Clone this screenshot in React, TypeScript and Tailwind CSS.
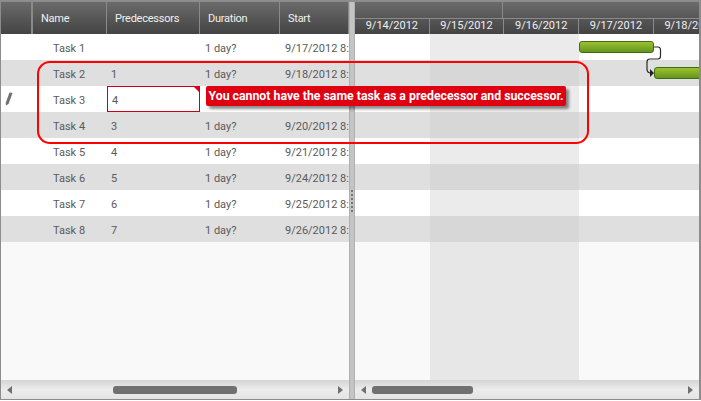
const tasks = [
  { name: "Task 1", pred: "", start: "9/17/2012 8:00 AM" },
  { name: "Task 2", pred: "1", start: "9/18/2012 8:00 AM" },
  { name: "Task 3", pred: "4", start: "9/19/2012 8:00 AM" },
  { name: "Task 4", pred: "3", start: "9/20/2012 8:00 AM" },
  { name: "Task 5", pred: "4", start: "9/21/2012 8:00 AM" },
  { name: "Task 6", pred: "5", start: "9/24/2012 8:00 AM" },
  { name: "Task 7", pred: "6", start: "9/25/2012 8:00 AM" },
  { name: "Task 8", pred: "7", start: "9/26/2012 8:00 AM" },
];

const days = ["9/14/2012", "9/15/2012", "9/16/2012", "9/17/2012", "9/18/2012"];

const HeaderCell = ({ label, width }: { label: string; width: string }) => (
  <div className={`${width} flex shrink-0 items-center border-r border-[#8a8a8a] pt-[3px] pl-2 text-[11px] tracking-[-0.25px] text-[#f0f0f0]`}>{label}</div>
);

const ScrollBar = ({ left, width }: { left: string; width: string }) => (
  <div className="flex h-[19px] items-center bg-gradient-to-b from-[#d4d4d4] via-[#ececec] to-[#e4e4e4] px-[6px]">
    <div className="h-0 w-0 border-y-[4px] border-r-[5px] border-y-transparent border-r-[#707070]" />
    <div className="flex-1">
      <div className={`${left} ${width} h-[8px] rounded-[3px] bg-[#707070]`} />
    </div>
    <div className="h-0 w-0 border-y-[4px] border-l-[5px] border-y-transparent border-l-[#707070]" />
  </div>
);

export default function App() {
  return (
    <div className="relative h-[401px] w-[701px] overflow-hidden bg-white font-['Roboto','Liberation_Sans',sans-serif]">
      <div className="flex h-[400px] w-[701px] border-2 border-b-1 border-l-1 border-[#8c8c8c]">
        {/* grid side */}
        <div className="flex w-[348px] shrink-0 flex-col bg-[#f9f9f9]">
          <div className="flex h-[32px] shrink-0 overflow-hidden bg-gradient-to-b from-[#6b6b6b] to-[#444444]">
            <div className="w-[32px] shrink-0 border-r-2 border-[#8a8a8a]" />
            <HeaderCell label="Name" width="w-[74px]" />
            <HeaderCell label="Predecessors" width="w-[93px]" />
            <HeaderCell label="Duration" width="w-[80px]" />
            <HeaderCell label="Start" width="w-[69px]" />
          </div>
          <div className="flex-1 overflow-hidden">
            {tasks.map((t, i) => (
              <div
                key={t.name}
                className={`flex h-[26px] items-start overflow-hidden text-[11px] leading-[29px] whitespace-nowrap text-[#5a5a5a] ${i % 2 ? "bg-[#dfdfdf]" : "bg-white"}`}
              >
                <div className="flex w-[32px] shrink-0 justify-start pl-[4px]">
                  {i === 2 && (
                    <svg width="8" height="14" viewBox="0 0 8 14" className="mt-[6px]">
                      <path d="M4.5 0.5 L7.5 1 L3.5 12 L1 13.5 L0.7 11 Z" fill="#707070" />
                    </svg>
                  )}
                </div>
                <div className="w-[74px] shrink-0 pl-[20px]">{t.name}</div>
                <div className="w-[93px] shrink-0 pl-[4px]">
                  {i === 2 ? (
                    <div className="relative h-[26px] w-[93px] -translate-x-[4px] border border-[#c8001a] bg-white pl-[4px] leading-[27px]">
                      {t.pred}
                      <div className="absolute top-0 right-0 h-0 w-0 border-t-[5px] border-l-[5px] border-t-[#df0012] border-l-transparent" />
                    </div>
                  ) : (
                    t.pred
                  )}
                </div>
                <div className="w-[80px] shrink-0 pl-[5px]">1 day?</div>
                <div className="w-[69px] shrink-0 overflow-hidden pl-[5px]">{t.start}</div>
              </div>
            ))}
          </div>
          <ScrollBar left="ml-[101px]" width="w-[124px]" />
        </div>

        {/* splitter */}
        <div className="flex w-[6px] shrink-0 flex-col items-center justify-center gap-[2px] border-x border-[#b0b0b0] bg-[#c4c4c4]">
          {[0, 1, 2, 3, 4, 5].map((d) => (
            <div key={d} className="h-[2px] w-[2px] bg-[#777777]" />
          ))}
        </div>

        {/* gantt side */}
        <div className="flex min-w-0 flex-1 flex-col bg-[#f9f9f9]">
          <div className="h-[32px] shrink-0 overflow-hidden bg-gradient-to-b from-[#6b6b6b] to-[#444444]">
            <div className="flex h-[17px] border-b border-[#8a8a8a]">
              <div className="w-[148px] shrink-0 border-r border-[#8a8a8a]" />
              <div className="flex-1" />
            </div>
            <div className="flex h-[15px]">
              {days.map((d) => (
                <div
                  key={d}
                  className="flex w-[74.7px] shrink-0 items-center justify-center border-r border-[#8a8a8a] text-[11px] whitespace-nowrap text-[#f0f0f0]"
                >
                  {d}
                </div>
              ))}
            </div>
          </div>
          <div className="relative flex-1 overflow-hidden">
            {tasks.map((t, i) => (
              <div key={t.name} className={`h-[26px] ${i % 2 ? "bg-[#dfdfdf]" : "bg-white"}`} />
            ))}
            <div className="absolute top-0 bottom-0 left-[75px] w-[149px] bg-[#cacaca]/[0.375]" />
            <div className="absolute top-[7px] left-[224px] h-[12px] w-[75px] rounded-[3px] border border-[#3f6b12] bg-gradient-to-b from-[#9cc22f] to-[#66941f]" />
            <div className="absolute top-[33px] left-[299px] h-[12px] w-[60px] rounded-[3px] border border-[#3f6b12] bg-gradient-to-b from-[#9cc22f] to-[#66941f]" />
            <svg className="absolute top-[10px] left-[290px]" width="20" height="40" viewBox="0 0 20 40" fill="none">
              <path d="M9 3 H13 Q15.5 3 15.5 6 V12 Q15.5 15 13 15 H5 Q2 15 2 18 V25 Q2 29 6 29" stroke="#2a2a2a" strokeWidth="1.2" />
              <path d="M5 25 L9 29 L5 33 Z" fill="#222222" />
            </svg>
          </div>
          <ScrollBar left="ml-[6px]" width="w-[101px]" />
        </div>
      </div>

      {/* validation message */}
      <div className="absolute top-[86px] left-[206px] flex h-[20px] w-[360px] items-center justify-center rounded-[2px] bg-[#df0012] text-[12.3px] font-bold whitespace-nowrap text-white shadow-[3px_3px_3px_rgba(0,0,0,0.45)]">
        You cannot have the same task as a predecessor and successor.
      </div>

      {/* annotation */}
      <div className="pointer-events-none absolute top-[61px] left-[37px] h-[83px] w-[552px] rounded-[13px] border-2 border-[#ff0000]" />
    </div>
  );
}
